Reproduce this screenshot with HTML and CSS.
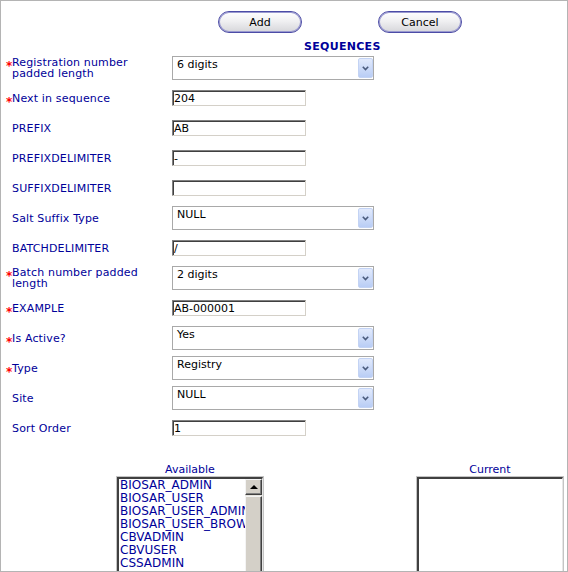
FILE: index.html
```html
<!DOCTYPE html>
<html>
<head>
<meta charset="utf-8">
<title>Sequences</title>
<link rel="stylesheet" href="styles.css">
</head>
<body>
<div class="frame">
  <div class="actions">
    <button class="btn" type="button">Add</button>
    <button class="btn" type="button">Cancel</button>
  </div>
  <div class="title">SEQUENCES</div>
  <div class="form">
    <div class="row">
      <div class="label"><span class="req">*</span><span class="text">Registration number padded length</span></div>
      <div class="select"><span class="sel-val">6 digits</span><span class="sel-btn"><svg width="7" height="5" viewBox="0 0 7 5"><path d="M0.8 0.8 L3.5 3.6 L6.2 0.8" fill="none" stroke="#4b5c7d" stroke-width="1.6"/></svg></span></div>
    </div>
    <div class="row">
      <div class="label"><span class="req">*</span><span class="text">Next in sequence</span></div>
      <input class="field" type="text" value="204">
    </div>
    <div class="row">
      <div class="label"><span class="req"></span><span class="text">PREFIX</span></div>
      <input class="field" type="text" value="AB">
    </div>
    <div class="row">
      <div class="label"><span class="req"></span><span class="text">PREFIXDELIMITER</span></div>
      <input class="field" type="text" value="-">
    </div>
    <div class="row">
      <div class="label"><span class="req"></span><span class="text">SUFFIXDELIMITER</span></div>
      <input class="field" type="text" value="">
    </div>
    <div class="row">
      <div class="label"><span class="req"></span><span class="text">Salt Suffix Type</span></div>
      <div class="select"><span class="sel-val">NULL</span><span class="sel-btn"><svg width="7" height="5" viewBox="0 0 7 5"><path d="M0.8 0.8 L3.5 3.6 L6.2 0.8" fill="none" stroke="#4b5c7d" stroke-width="1.6"/></svg></span></div>
    </div>
    <div class="row">
      <div class="label"><span class="req"></span><span class="text">BATCHDELIMITER</span></div>
      <input class="field" type="text" value="/">
    </div>
    <div class="row">
      <div class="label"><span class="req">*</span><span class="text">Batch number padded length</span></div>
      <div class="select"><span class="sel-val">2 digits</span><span class="sel-btn"><svg width="7" height="5" viewBox="0 0 7 5"><path d="M0.8 0.8 L3.5 3.6 L6.2 0.8" fill="none" stroke="#4b5c7d" stroke-width="1.6"/></svg></span></div>
    </div>
    <div class="row">
      <div class="label"><span class="req">*</span><span class="text">EXAMPLE</span></div>
      <input class="field" type="text" value="AB-000001">
    </div>
    <div class="row">
      <div class="label"><span class="req">*</span><span class="text">Is Active?</span></div>
      <div class="select"><span class="sel-val">Yes</span><span class="sel-btn"><svg width="7" height="5" viewBox="0 0 7 5"><path d="M0.8 0.8 L3.5 3.6 L6.2 0.8" fill="none" stroke="#4b5c7d" stroke-width="1.6"/></svg></span></div>
    </div>
    <div class="row">
      <div class="label"><span class="req">*</span><span class="text">Type</span></div>
      <div class="select"><span class="sel-val">Registry</span><span class="sel-btn"><svg width="7" height="5" viewBox="0 0 7 5"><path d="M0.8 0.8 L3.5 3.6 L6.2 0.8" fill="none" stroke="#4b5c7d" stroke-width="1.6"/></svg></span></div>
    </div>
    <div class="row">
      <div class="label"><span class="req"></span><span class="text">Site</span></div>
      <div class="select"><span class="sel-val">NULL</span><span class="sel-btn"><svg width="7" height="5" viewBox="0 0 7 5"><path d="M0.8 0.8 L3.5 3.6 L6.2 0.8" fill="none" stroke="#4b5c7d" stroke-width="1.6"/></svg></span></div>
    </div>
    <div class="row">
      <div class="label"><span class="req"></span><span class="text">Sort Order</span></div>
      <input class="field" type="text" value="1">
    </div>
  </div>
  <div class="lists">
    <div class="col">
      <div class="list-title">Available</div>
      <div class="listbox">
        <div class="listbox-inner">
          <div class="items">
            <div class="item">BIOSAR_ADMIN</div>
            <div class="item">BIOSAR_USER</div>
            <div class="item">BIOSAR_USER_ADMIN</div>
            <div class="item">BIOSAR_USER_BROWSER</div>
            <div class="item">CBVADMIN</div>
            <div class="item">CBVUSER</div>
            <div class="item">CSSADMIN</div>
            <div class="item">CSSUSER</div>
          </div>
          <div class="scrollbar">
            <div class="sb-up"><span class="tri"></span></div>
            <div class="sb-thumb"></div>
          </div>
        </div>
      </div>
    </div>
    <div class="col">
      <div class="list-title">Current</div>
      <div class="listbox">
        <div class="listbox-inner"></div>
      </div>
    </div>
  </div>
</div>
</body>
</html>
```

FILE: styles.css
```css
html, body {
  margin: 0;
  padding: 0;
  background: #ffffff;
}

.frame {
  width: 568px;
  height: 572px;
  box-sizing: border-box;
  border: 1px solid #b4b4b4;
  overflow: hidden;
  font-family: "DejaVu Sans", Verdana, sans-serif;
  font-size: 11px;
  color: #000099;
}

.actions {
  display: flex;
  padding: 10px 0 0 217px;
  gap: 76px;
}

.btn {
  width: 84px;
  height: 22px;
  box-sizing: border-box;
  margin: 0;
  padding: 0;
  border: 1px solid #4c4ca6;
  box-shadow: inset 0 0 0 1px #9a9ad0;
  border-radius: 11px;
  background: linear-gradient(#ffffff, #f0f0f2 45%, #d6d6da);
  font-family: "DejaVu Sans", Verdana, sans-serif;
  font-size: 11px;
  color: #000000;
}

.title {
  padding: 7px 0 0 303px;
  line-height: 13px;
  font-size: 11px;
  font-weight: bold;
  letter-spacing: 0.3px;
  color: #000099;
}

.row {
  display: flex;
  align-items: center;
  height: 30px;
}

.label {
  width: 171px;
  box-sizing: border-box;
  padding-left: 5px;
  display: flex;
  align-items: flex-start;
  flex: none;
}

.req {
  width: 6px;
  flex: none;
  color: #ff0000;
  font-size: 12px;
  font-weight: bold;
  line-height: 11px;
  padding-top: 4px;
  height: 7px;
}

.text {
  width: 148px;
  line-height: 11px;
  color: #000099;
  letter-spacing: 0.15px;
}

.select {
  width: 202px;
  height: 24px;
  box-sizing: border-box;
  border: 1px solid #a9a9a9;
  background: #ffffff;
  display: flex;
  align-items: flex-start;
}

.sel-val {
  flex: 1;
  padding: 1px 0 0 4px;
  line-height: 13px;
  color: #000000;
}

.sel-btn {
  width: 15px;
  height: 20px;
  margin: 1px 0;
  box-sizing: border-box;
  border: 1px solid #c3d3f4;
  border-radius: 2px;
  background: linear-gradient(#e2eafc, #b9cdf5);
  display: flex;
  align-items: center;
  justify-content: center;
}

.field {
  width: 134px;
  height: 16px;
  box-sizing: border-box;
  margin: 0;
  padding: 0 0 0 1px;
  border: 1px solid;
  border-color: #808080 #d4d0c8 #d4d0c8 #808080;
  box-shadow: inset 1px 1px 0 #404040;
  font-family: "DejaVu Sans", Verdana, sans-serif;
  font-size: 11px;
  line-height: 14px;
  color: #000000;
  outline: none;
  background: #ffffff;
}

.lists {
  display: flex;
  padding-left: 115px;
  gap: 152px;
  margin-top: 19px;
}

.col {
  width: 148px;
}

.list-title {
  text-align: center;
  padding-top: 2px;
  line-height: 12px;
  color: #000099;
}

.listbox {
  height: 120px;
  box-sizing: border-box;
  border: 1px solid #c4c4c4;
  background: #ffffff;
}

.listbox-inner {
  height: 100%;
  box-sizing: border-box;
  border-style: solid;
  border-width: 2px 1px 1px 2px;
  border-color: #404040 #e6e6e6 #e6e6e6 #404040;
  display: flex;
}

.items {
  flex: 1;
  overflow: hidden;
  padding-left: 1px;
}

.item {
  font-size: 12px;
  line-height: 13px;
  white-space: nowrap;
  color: #000099;
}

.scrollbar {
  width: 17px;
  flex: none;
  display: flex;
  flex-direction: column;
  background: #e8e6e0;
}

.sb-up,
.sb-thumb {
  box-sizing: border-box;
  background: #d4d0c8;
  border: 1px solid;
  border-color: #f4f4f4 #404040 #404040 #f4f4f4;
  box-shadow: inset -1px -1px 0 #808080;
}

.sb-up {
  height: 16px;
  display: flex;
  align-items: center;
  justify-content: center;
}

.tri {
  width: 0;
  height: 0;
  border-left: 4px solid transparent;
  border-right: 4px solid transparent;
  border-bottom: 4px solid #000000;
}

.sb-thumb {
  flex: 1;
  margin-top: 1px;
}
```
